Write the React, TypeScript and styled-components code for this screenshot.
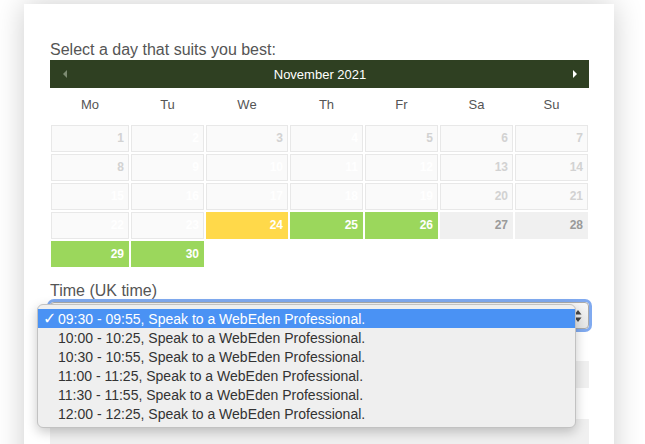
import React from "react";
import styled, { createGlobalStyle } from "styled-components";

const GlobalStyle = createGlobalStyle`
  html, body { margin: 0; padding: 0; background: #ffffff; }
  body { font-family: "Liberation Sans", Arial, sans-serif; overflow: hidden; }
  * { box-sizing: border-box; }
`;

const Page = styled.div`
  padding: 4px 0 0 24px;
  width: 645px;
  height: 444px;
  overflow: hidden;
`;

const Card = styled.div`
  width: 590px;
  height: 520px;
  background: #ffffff;
  box-shadow: 0 0 28px rgba(0, 0, 0, 0.2);
  padding: 37px 25px 0 26px;
`;

const Label = styled.div<{ $mt?: number }>`
  font-size: 16px;
  line-height: 18px;
  color: #555555;
  margin-top: ${(p) => p.$mt ?? 0}px;
`;

const CalHeader = styled.div`
  margin-top: 1px;
  height: 28px;
  background: #2f4022;
  display: flex;
  align-items: center;
  justify-content: space-between;
  padding: 0 12px 0 13px;
`;

const Title = styled.div`
  color: #ffffff;
  font-size: 13px;
`;

const Arrow = styled.div<{ $dir: "left" | "right"; $dim?: boolean }>`
  width: 0;
  height: 0;
  border-top: 4px solid transparent;
  border-bottom: 4px solid transparent;
  ${(p) =>
    p.$dir === "left"
      ? `border-right: 4px solid ${p.$dim ? "#7d8b72" : "#ffffff"};`
      : `border-left: 4px solid ${p.$dim ? "#7d8b72" : "#ffffff"};`}
`;

const cols = "78px 73px 82px 73px 73px 73px 73px";

const WeekRow = styled.div`
  display: grid;
  grid-template-columns: ${cols};
  column-gap: 2px;
  margin-left: 1px;
  height: 34px;
  margin-bottom: 3px;
`;

const WeekDay = styled.div`
  text-align: center;
  line-height: 34px;
  font-size: 13px;
  color: #555555;
`;

const DayGrid = styled.div`
  display: grid;
  grid-template-columns: ${cols};
  grid-template-rows: 27px 27px 27px 27px 26px;
  gap: 2px;
  margin-left: 1px;
`;

type Kind = "past" | "pastHidden" | "today" | "open" | "closed";

const Day = styled.div<{ $kind: Kind }>`
  font-size: 12px;
  font-weight: bold;
  text-align: right;
  padding-right: 4px;
  line-height: 24px;
  border: 1px solid transparent;
  ${(p) => {
    switch (p.$kind) {
      case "past":
        return "background:#fafafa;border-color:#e8e8e8;color:#d2d2d2;";
      case "pastHidden":
        return "background:#fafafa;border-color:#e8e8e8;color:#ffffff;";
      case "today":
        return "background:#ffd94a;color:#ffffff;";
      case "open":
        return "background:#9bd75c;color:#ffffff;";
      default:
        return "background:#f0f0f0;color:#9a9a9a;";
    }
  }}
`;

const SelectWrap = styled.div`
  position: relative;
  margin-top: 2px;
`;

const SelectBox = styled.div`
  height: 27px;
  border: 1px solid #aaaaaa;
  border-radius: 4px;
  background: linear-gradient(#f7f7f7, #e6e6e6);
  box-shadow: 0 0 0 3px #80aaf0;
  display: flex;
  align-items: center;
  justify-content: flex-end;
  padding: 0 6px 0 8px;
`;

const Stepper = styled.svg`
  width: 8px;
  height: 14px;
`;

const Popup = styled.div`
  position: absolute;
  left: -13px;
  top: 2px;
  width: 539px;
  padding: 4px 0;
  background: #efefef;
  border: 1px solid #c2c2c2;
  border-radius: 6px;
  box-shadow: 0 4px 12px rgba(0, 0, 0, 0.22);
  z-index: 2;
`;

const Option = styled.div<{ $active?: boolean }>`
  height: 19px;
  display: flex;
  align-items: center;
  padding-left: 5px;
  font-size: 14px;
  color: ${(p) => (p.$active ? "#ffffff" : "#333333")};
  background: ${(p) => (p.$active ? "#4a92f4" : "transparent")};
`;

const Check = styled.span`
  width: 15px;
  font-family: "DejaVu Sans", sans-serif;
  font-size: 16px;
  line-height: 19px;
  font-weight: bold;
`;

const Field = styled.div<{ $mt: number }>`
  height: 27px;
  margin-top: ${(p) => p.$mt}px;
  background: #f0f0f0;
`;

const days: { n: number; k: Kind }[] = [
  { n: 1, k: "past" },
  { n: 2, k: "pastHidden" },
  { n: 3, k: "past" },
  { n: 4, k: "pastHidden" },
  { n: 5, k: "past" },
  { n: 6, k: "past" },
  { n: 7, k: "past" },
  { n: 8, k: "past" },
  { n: 9, k: "pastHidden" },
  { n: 10, k: "pastHidden" },
  { n: 11, k: "pastHidden" },
  { n: 12, k: "pastHidden" },
  { n: 13, k: "past" },
  { n: 14, k: "past" },
  { n: 15, k: "pastHidden" },
  { n: 16, k: "pastHidden" },
  { n: 17, k: "pastHidden" },
  { n: 18, k: "pastHidden" },
  { n: 19, k: "pastHidden" },
  { n: 20, k: "past" },
  { n: 21, k: "past" },
  { n: 22, k: "pastHidden" },
  { n: 23, k: "pastHidden" },
  { n: 24, k: "today" },
  { n: 25, k: "open" },
  { n: 26, k: "open" },
  { n: 27, k: "closed" },
  { n: 28, k: "closed" },
  { n: 29, k: "open" },
  { n: 30, k: "open" },
];

const options = [
  "09:30 - 09:55",
  "10:00 - 10:25",
  "10:30 - 10:55",
  "11:00 - 11:25",
  "11:30 - 11:55",
  "12:00 - 12:25",
];

const weekdays = ["Mo", "Tu", "We", "Th", "Fr", "Sa", "Su"];

export default function App() {
  return (
    <>
      <GlobalStyle />
      <Page>
        <Card>
          <Label>Select a day that suits you best:</Label>
          <CalHeader>
            <Arrow $dir="left" $dim />
            <Title>November 2021</Title>
            <Arrow $dir="right" />
          </CalHeader>
          <WeekRow>
            {weekdays.map((w) => (
              <WeekDay key={w}>{w}</WeekDay>
            ))}
          </WeekRow>
          <DayGrid>
            {days.map((d) => (
              <Day key={d.n} $kind={d.k}>
                {d.n}
              </Day>
            ))}
          </DayGrid>
          <Label $mt={15}>Time (UK time)</Label>
          <SelectWrap>
            <SelectBox>
              <Stepper viewBox="0 0 8 14">
                <path d="M4 1 L7.5 5.5 H0.5 Z" fill="#444" />
                <path d="M4 13 L7.5 8.5 H0.5 Z" fill="#444" />
              </Stepper>
            </SelectBox>
            <Popup>
              {options.map((o, i) => (
                <Option key={o} $active={i === 0}>
                  <Check>{i === 0 ? "✓" : ""}</Check>
                  {o}, Speak to a WebEden Professional.
                </Option>
              ))}
            </Popup>
          </SelectWrap>
          <Field $mt={32} />
          <Field $mt={31} />
        </Card>
      </Page>
    </>
  );
}
